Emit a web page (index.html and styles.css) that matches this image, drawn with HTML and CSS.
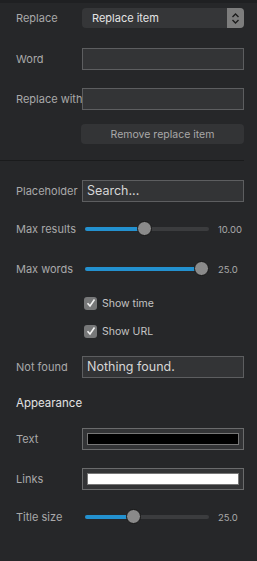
FILE: index.html
```html
<!DOCTYPE html>
<html lang="en">
<head>
    <meta charset="UTF-8">
    <meta name="viewport" content="width=device-width, initial-scale=1.0">
    <title>Search Settings</title>
    <link rel="stylesheet" href="styles.css">
</head>
<body>
    <div class="panel">
        <div class="row row-first">
            <label class="label">Replace</label>
            <div class="select">
                <span class="select-value">Replace item</span>
                <span class="select-arrows">
                    <svg width="9" height="13" viewBox="0 0 9 13">
                        <path d="M1.5 5 L4.5 2 L7.5 5 M1.5 8 L4.5 11 L7.5 8" fill="none" stroke="#1c1c1c" stroke-width="1.4"/>
                    </svg>
                </span>
            </div>
        </div>

        <div class="row gap-20">
            <label class="label">Word</label>
            <div class="field"></div>
        </div>

        <div class="row gap-18">
            <label class="label">Replace with</label>
            <div class="field"></div>
        </div>

        <div class="row gap-14">
            <span class="label"></span>
            <button class="button">Remove replace item</button>
        </div>

        <hr class="separator">

        <div class="row gap-19">
            <label class="label">Placeholder</label>
            <div class="field field-text">Search...</div>
        </div>

        <div class="row gap-18 slider-row">
            <label class="label">Max results</label>
            <div class="slider">
                <div class="track"><div class="fill" style="width: 59px"></div></div>
                <div class="thumb" style="left: 52px"></div>
            </div>
            <span class="value">10.00</span>
        </div>

        <div class="row gap-22 slider-row">
            <label class="label">Max words</label>
            <div class="slider">
                <div class="track"><div class="fill" style="width: 116px"></div></div>
                <div class="thumb" style="left: 109px"></div>
            </div>
            <span class="value">25.0</span>
        </div>

        <div class="row gap-18 check-row">
            <span class="label"></span>
            <span class="checkbox">
                <svg width="10" height="10" viewBox="0 0 10 10">
                    <path d="M1.5 5.2 L4 8 L8.5 1.5" fill="none" stroke="#f2f2f2" stroke-width="1.6"/>
                </svg>
            </span>
            <span class="check-label">Show time</span>
        </div>

        <div class="row gap-14 check-row">
            <span class="label"></span>
            <span class="checkbox">
                <svg width="10" height="10" viewBox="0 0 10 10">
                    <path d="M1.5 5.2 L4 8 L8.5 1.5" fill="none" stroke="#f2f2f2" stroke-width="1.6"/>
                </svg>
            </span>
            <span class="check-label">Show URL</span>
        </div>

        <div class="row gap-18">
            <label class="label">Not found</label>
            <div class="field field-text">Nothing found.</div>
        </div>

        <h3 class="section-title">Appearance</h3>

        <div class="row gap-17">
            <label class="label">Text</label>
            <div class="well"><div class="swatch swatch-black"></div></div>
        </div>

        <div class="row gap-18">
            <label class="label">Links</label>
            <div class="well"><div class="swatch swatch-white"></div></div>
        </div>

        <div class="row gap-18 slider-row">
            <label class="label">Title size</label>
            <div class="slider">
                <div class="track"><div class="fill" style="width: 48px"></div></div>
                <div class="thumb" style="left: 41px"></div>
            </div>
            <span class="value">25.0</span>
        </div>
    </div>
</body>
</html>
```

FILE: styles.css
```css
body {
    margin: 0;
    padding: 0;
    background-color: #262729;
    font-family: 'Inter', 'Liberation Sans', sans-serif;
    color: #a9a9a9;
}

.panel {
    border-top: 3px solid #1f2022;
    padding: 5px 13px 30px 16px;
}

.row {
    display: flex;
    align-items: center;
}

.row-first { margin-top: 0; }
.gap-14 { margin-top: 14px; }
.gap-17 { margin-top: 17px; }
.gap-18 { margin-top: 18px; }
.gap-19 { margin-top: 19px; }
.gap-20 { margin-top: 20px; }
.gap-22 { margin-top: 22px; }

.label {
    width: 66px;
    flex-shrink: 0;
    font-size: 11px;
    color: #a9a9a9;
    white-space: nowrap;
}

/* Select */
.select {
    display: flex;
    width: 162px;
    height: 20px;
    background-color: #353638;
    border-radius: 4px;
    overflow: hidden;
}

.select-value {
    flex: 1;
    padding-left: 10px;
    line-height: 20px;
    font-size: 11px;
    color: #e4e4e4;
}

.select-arrows {
    width: 17px;
    background-color: #7d7d7d;
    display: flex;
    align-items: center;
    justify-content: center;
}

/* Text fields */
.field {
    box-sizing: border-box;
    width: 162px;
    height: 22px;
    background-color: #333436;
    border: 1px solid #5d5e60;
}

.field-text {
    padding-left: 4px;
    line-height: 20px;
    font-size: 12.5px;
    color: #d6d6d6;
}

.button {
    width: 163px;
    height: 20px;
    margin-left: -1px;
    padding: 0;
    border: none;
    border-radius: 4px;
    background-color: #333436;
    color: #a9a9a9;
    font-family: inherit;
    font-size: 10.5px;
}

.separator {
    border: none;
    border-top: 1px solid #1a1b1c;
    margin: 16px -13px 0 -16px;
    width: 244px;
}

/* Sliders */
.slider-row {
    height: 18px;
}

.slider {
    position: relative;
    width: 124px;
    height: 18px;
    margin-left: 3px;
}

.track {
    position: absolute;
    left: 0;
    right: 0;
    top: 7px;
    height: 4px;
    border-radius: 2px;
    background-color: #3b3c3e;
    overflow: hidden;
}

.fill {
    height: 100%;
    background-color: #2391cf;
}

.thumb {
    position: absolute;
    top: 1px;
    box-sizing: border-box;
    width: 15px;
    height: 15px;
    border-radius: 50%;
    background-color: #8a8a8a;
    border: 1px solid #151515;
}

.value {
    margin-left: 9px;
    font-size: 9.5px;
    color: #a9a9a9;
}

/* Checkboxes */
.check-row {
    height: 14px;
}

.checkbox {
    box-sizing: border-box;
    width: 13px;
    height: 13px;
    margin-left: 2px;
    border-radius: 3px;
    background-color: #777879;
    display: flex;
    align-items: center;
    justify-content: center;
}

.check-label {
    margin-left: 5px;
    font-size: 10.5px;
    color: #c4c4c4;
}

.section-title {
    margin: 17px 0 0;
    height: 16px;
    line-height: 16px;
    font-size: 11.5px;
    font-weight: normal;
    color: #e2e2e2;
}

/* Color wells */
.well {
    box-sizing: border-box;
    width: 162px;
    height: 22px;
    padding: 4px;
    background-color: #333436;
    border: 1px solid #6a6b6c;
}

.swatch {
    box-sizing: border-box;
    height: 12px;
    border: 1px solid #777;
}

.swatch-black { background-color: #000; }
.swatch-white { background-color: #fff; }
```
